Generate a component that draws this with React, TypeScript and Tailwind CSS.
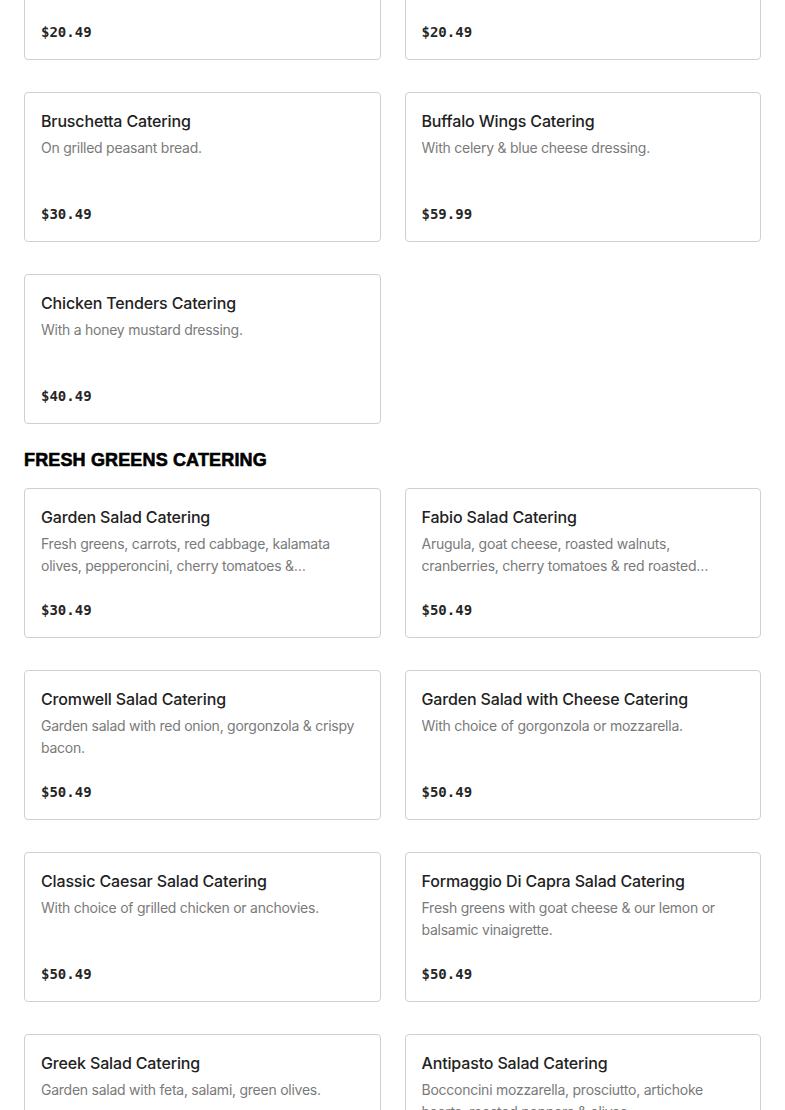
type Item = { name: string; desc: string; price: string }

const appetizers: Item[] = [
  { name: "Mozzarella Sticks Catering", desc: "Served with a side of our homemade marinara.", price: "$20.49" },
  { name: "Garlic Knots Catering", desc: "Baked fresh and tossed in garlic, olive oil & parmesan cheese.", price: "$20.49" },
  { name: "Bruschetta Catering", desc: "On grilled peasant bread.", price: "$30.49" },
  { name: "Buffalo Wings Catering", desc: "With celery & blue cheese dressing.", price: "$59.99" },
  { name: "Chicken Tenders Catering", desc: "With a honey mustard dressing.", price: "$40.49" },
]

const greens: Item[] = [
  {
    name: "Garden Salad Catering",
    desc: "Fresh greens, carrots, red cabbage, kalamata olives, pepperoncini, cherry tomatoes & cucumbers.",
    price: "$30.49",
  },
  {
    name: "Fabio Salad Catering",
    desc: "Arugula, goat cheese, roasted walnuts, cranberries, cherry tomatoes & red roasted peppers.",
    price: "$50.49",
  },
  { name: "Cromwell Salad Catering", desc: "Garden salad with red onion, gorgonzola & crispy bacon.", price: "$50.49" },
  { name: "Garden Salad with Cheese Catering", desc: "With choice of gorgonzola or mozzarella.", price: "$50.49" },
  { name: "Classic Caesar Salad Catering", desc: "With choice of grilled chicken or anchovies.", price: "$50.49" },
  {
    name: "Formaggio Di Capra Salad Catering",
    desc: "Fresh greens with goat cheese & our lemon or balsamic vinaigrette.",
    price: "$50.49",
  },
  { name: "Greek Salad Catering", desc: "Garden salad with feta, salami, green olives.", price: "$50.49" },
  {
    name: "Antipasto Salad Catering",
    desc: "Bocconcini mozzarella, prosciutto, artichoke hearts, roasted peppers & olives.",
    price: "$50.49",
  },
]

function MenuCard({ item }: { item: Item }) {
  return (
    <div className="h-[150px] flex flex-col border border-[#d0d0d0] rounded-[4px] bg-white px-4 pt-4 pb-[15px]">
      <h4 className="text-[16px] leading-6 font-medium text-[#222] tracking-[-0.15px]">{item.name}</h4>
      <p className="mt-1 text-[14px] leading-[22px] text-[#7a7a7a] tracking-[-0.25px] line-clamp-2">{item.desc}</p>
      <span
        className="mt-auto text-[14px] leading-6 font-bold text-[#262626]"
        style={{ fontFamily: '"DejaVu Sans Mono", "Liberation Mono", monospace' }}
      >
        {item.price}
      </span>
    </div>
  )
}

export default function App() {
  return (
    <div className="h-[1110px] overflow-hidden bg-white" style={{ fontFamily: 'Inter, "Noto Sans", sans-serif' }}>
      <div className="-mt-[90px] px-6">
        {/* Appetizers (tail) */}
        <div className="grid grid-cols-2 gap-x-6 gap-y-8">
          {appetizers.map((item) => (
            <MenuCard key={item.name} item={item} />
          ))}
        </div>

        {/* Fresh greens */}
        <h3
          className="mt-6 mb-4 text-[18px] leading-6 font-black text-black uppercase tracking-[0.15px] [-webkit-text-stroke:0.6px_black]"
          style={{ fontFamily: '"Liberation Sans", Arial, sans-serif' }}
        >
          Fresh Greens Catering
        </h3>
        <div className="grid grid-cols-2 gap-x-6 gap-y-8">
          {greens.map((item) => (
            <MenuCard key={item.name} item={item} />
          ))}
        </div>
      </div>
    </div>
  )
}
